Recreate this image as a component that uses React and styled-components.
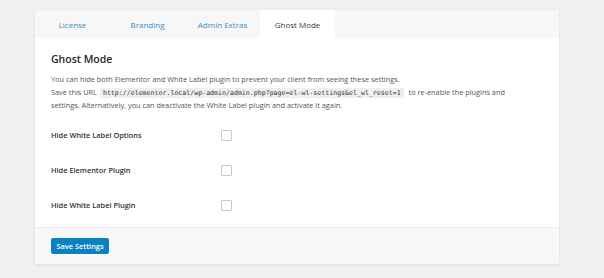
import styled, { createGlobalStyle } from "styled-components";

const GlobalStyle = createGlobalStyle`
  body {
    margin: 0;
    background: #f0f0f0;
    font-family: "Open Sans", "Noto Sans", sans-serif;
    color: #444;
  }
`

const Page = styled.div`
  padding: 10px 0 14px 35px;
`

const Card = styled.div`
  width: 524px;
  background: #fff;
  box-shadow: 0 1px 3px rgba(0, 0, 0, 0.08);
`

const Tabs = styled.div`
  display: flex;
  height: 28px;
  background: #f7f7f7;
`

const Tab = styled.div`
  width: 75px;
  display: flex;
  align-items: center;
  justify-content: center;
  font-size: 8px;
  color: ${(p) => (p.$active ? "#3a3a3a" : "#3b8bc5")};
  background: ${(p) => (p.$active ? "#fff" : "transparent")};
`

const Body = styled.div`
  padding: 14px 16px 6px 16px;
`

const Title = styled.h2`
  margin: 0 0 7px 0;
  font-size: 10.5px;
  font-weight: 600;
  color: #23282d;
`

const Text = styled.p`
  margin: 0;
  width: 466px;
  font-size: 7.35px;
  line-height: 13px;
  color: #555;
`

const Code = styled.code`
  font-family: "DejaVu Sans Mono", "Liberation Mono", monospace;
  font-size: 6.6px;
  line-height: 9px;
  background: #efefef;
  padding: 1px 3px;
  margin: 0 3px;
  color: #333;
`

const Options = styled.div`
  margin-top: 17px;
  display: flex;
  flex-direction: column;
  gap: 23px;
`

const Row = styled.div`
  display: flex;
  align-items: center;
  height: 12px;
`

const Label = styled.span`
  width: 170px;
  font-size: 7.4px;
  font-weight: 600;
  color: #333;
`

const Box = styled.span`
  width: 9px;
  height: 9px;
  border: 1px solid #c8c8c8;
  border-radius: 1px;
  background: #fff;
`

const Footer = styled.div`
  margin-top: 10px;
  border-top: 1px solid #ececec;
  background: #f8f8f8;
  padding: 10px 16px 10px 16px;
`

const Button = styled.button`
  display: block;
  height: 16px;
  width: 58px;
  padding: 0;
  border: none;
  border-radius: 2px;
  background: #0882c0;
  color: #fff;
  font-family: "Open Sans", "Noto Sans", sans-serif;
  font-size: 7.4px;
  font-weight: 600;
`

const options = ["Hide White Label Options", "Hide Elementor Plugin", "Hide White Label Plugin"]

export default function App() {
  return (
    <>
      <GlobalStyle />
      <Page>
        <Card>
          <Tabs>
            <Tab>License</Tab>
            <Tab>Branding</Tab>
            <Tab>Admin Extras</Tab>
            <Tab $active>Ghost Mode</Tab>
          </Tabs>
          <Body>
            <Title>Ghost Mode</Title>
            <Text>
              You can hide both Elementor and White Label plugin to prevent your client from seeing these settings.
              <br />
              Save this URL<Code>http://elementor.local/wp-admin/admin.php?page=el-wl-settings&amp;el_wl_reset=1</Code> to re-enable the plugins and
              settings. Alternatively, you can deactivate the White Label plugin and activate it again.
            </Text>
            <Options>
              {options.map((o) => (
                <Row key={o}>
                  <Label>{o}</Label>
                  <Box />
                </Row>
              ))}
            </Options>
          </Body>
          <Footer>
            <Button>Save Settings</Button>
          </Footer>
        </Card>
      </Page>
    </>
  )
}
